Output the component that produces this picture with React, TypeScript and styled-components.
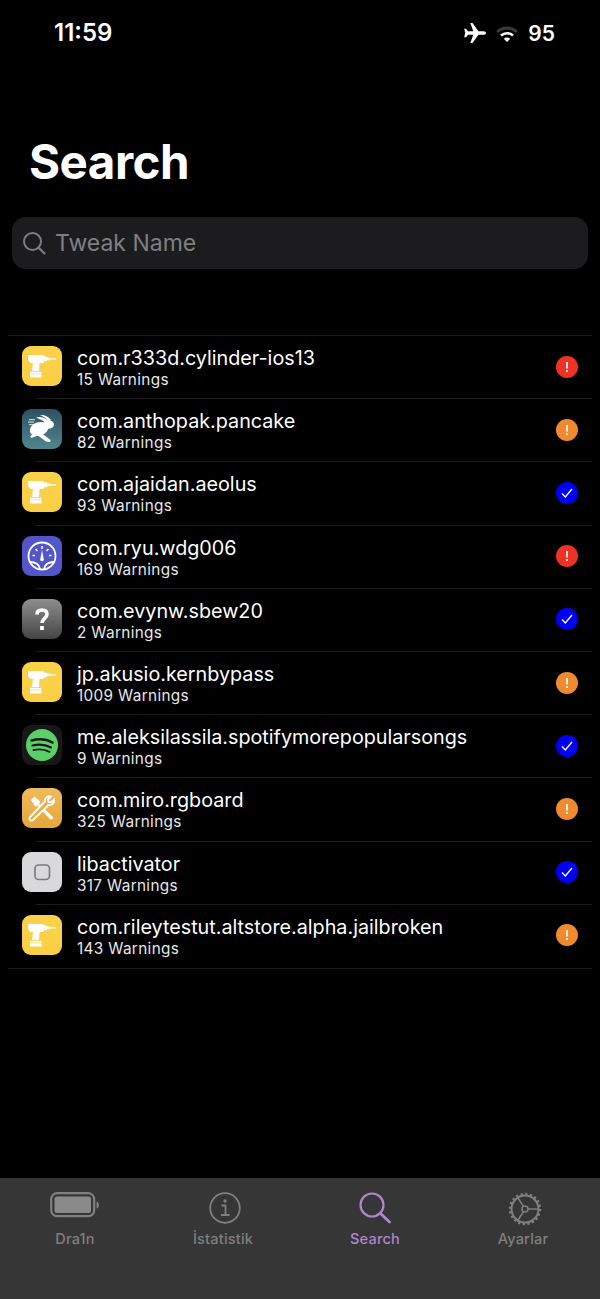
import React from 'react'
import styled, {createGlobalStyle} from 'styled-components'

const GlobalStyle = createGlobalStyle`
  html, body {
    margin: 0;
    padding: 0;
    background: #000;
  }
  body {
    font-family: Inter, "Liberation Sans", sans-serif;
    color: #fff;
  }
`

const Screen = styled.div`
  width: 600px;
  height: 1299px;
  display: flex;
  flex-direction: column;
  background: #000;
  overflow: hidden;
`

const StatusBar = styled.div`
  height: 66px;
  box-sizing: border-box;
  padding: 19px 45px 0 54px;
  display: flex;
  justify-content: space-between;
  align-items: flex-start;
`

const Time = styled.div`
  font-size: 24px;
  line-height: 28px;
  font-weight: 600;
`

const StatusIcons = styled.div`
  display: flex;
  align-items: center;
  height: 28px;
  gap: 9px;
`

const Battery = styled.div`
  font-size: 21px;
  font-weight: 600;
  margin-left: 1px;
`

const Title = styled.h1`
  margin: 0;
  padding: 65px 0 0 29px;
  font-size: 47.500px;
  line-height: 62px;
  font-weight: 700;
  letter-spacing: -0.5px;
`

const SearchBox = styled.div`
  margin: 24px 12px 0;
  height: 52px;
  background: #1c1c1e;
  border-radius: 14px;
  display: flex;
  align-items: center;
  padding-left: 9px;
  gap: 8px;
  color: #7c7c80;
`

const Placeholder = styled.span`
  font-size: 23px;
  color: #7f7f83;
`

const List = styled.div`
  margin: 66px 8px 0;
  border-top: 1px solid #1c1c1e;
  border-bottom: 1px solid #1c1c1e;
`

const Row = styled.div<{ $last?: boolean }>`
  height: 63.2px;
  box-sizing: border-box;
  position: relative;
  display: flex;
  align-items: center;
  padding: 0 14px;
  ${p => !p.$last && `
    &::after {
      content: '';
      position: absolute;
      left: 28px;
      right: 0;
      bottom: 0;
      height: 1px;
      background: #1c1c1e;
    }
  `}
`

const IconBox = styled.div<{ $bg: string }>`
  width: 40px;
  height: 40px;
  flex: none;
  margin-bottom: 3px;
  border-radius: 9px;
  background: ${p => p.$bg};
  display: flex;
  align-items: center;
  justify-content: center;
  overflow: hidden;
`

const Texts = styled.div`
  flex: 1;
  margin-left: 15px;
  min-width: 0;
`

const Name = styled.div`
  font-size: 19.75px;
  line-height: 24px;
  font-weight: 400;
  color: #fff;
`

const Sub = styled.div`
  font-size: 15.3px;
  line-height: 19px;
  color: #e8e8e8;
  letter-spacing: 0.35px;
`

const Badge = styled.div<{ $color: string }>`
  width: 22px;
  height: 22px;
  flex: none;
  margin-bottom: 2px;
  border-radius: 50%;
  background: ${p => p.$color};
  display: flex;
  align-items: center;
  justify-content: center;
`

const TabBar = styled.div`
  margin-top: auto;
  height: 121px;
  background: #363636;
  display: grid;
  grid-template-columns: repeat(4, 150px);
`

const Tab = styled.div<{ $active?: boolean }>`
  display: flex;
  flex-direction: column;
  align-items: center;
  color: ${p => p.$active ? '#b184cf' : '#7f7f7f'};
`

const TabIcon = styled.div`
  height: 50px;
  padding-top: 14px;
  box-sizing: border-box;
  display: flex;
  align-items: flex-start;
  justify-content: center;
`

const TabLabel = styled.span<{ $nudge?: boolean }>`
  margin-top: 2px;
  margin-right: ${p => p.$nudge ? '4px' : '0'};
  font-size: 14.5px;
  line-height: 18px;
  font-weight: 500;
  letter-spacing: 0.2px;
`

const Drill = () => (
  <svg width="40" height="40" viewBox="0 0 40 40" fill="#fff">
    <path d="M6 9h15l1.500 1.500H25v1h3v.8h6v1.200h-6v.8h-3v1h-2.500L21 17h-3.500l-.5 8h-7l1-8H8.500L6 14z"/>
    <rect x="8" y="25.800" width="11.500" height="1.800"/>
    <rect x="8" y="28.200" width="11.500" height="3.300"/>
  </svg>
)

const Rabbit = () => (
  <svg width="40" height="40" viewBox="0 0 40 40" fill="#fff">
    <ellipse cx="17" cy="20" rx="9.500" ry="6.800" transform="rotate(-18 17 20)"/>
    <ellipse cx="26.500" cy="15.500" rx="5.500" ry="4.300"/>
    <path d="M14 8.500c4-1.500 9 0 12.500 3.500l-2 2c-3.500-2.500-7-4-10.500-5.500z"/>
    <path d="M18 6c4-.5 8 1 11 5l-2 1.500C24.500 9.500 21.500 7.500 18 6z"/>
    <path d="M18 23l10 7.500c1.200 1 .5 2.800-1 2.500l-3-.5-9.500-7z"/>
    <path d="M15 24l-6 2.500c-1.200 1-.5 2.500 1 2.200l7-2.700z"/>
    <rect x="7" y="10" width="6" height="1.200" opacity=".7"/>
    <rect x="6" y="12.500" width="6" height="1.200" opacity=".7"/>
    <rect x="7" y="15" width="5" height="1.200" opacity=".7"/>
  </svg>
)

const Gauge = () => (
  <svg width="40" height="40" viewBox="0 0 40 40" fill="none" stroke="#fff" strokeWidth="1.800">
    <circle cx="20" cy="20" r="13.500"/>
    <path d="M8 26c5 0 9 1.500 10 7M32 26c-5 0-9 1.500-10 7"/>
    <path d="M20 10v3M13.500 13l2 2M26.500 13l-2 2M10.500 19.500h2.500M29.500 19.500h-2.500" strokeWidth="1.500"/>
    <path d="M20 14l1.800 9.500a1.800 1.800 0 1 1-3.600 0z" fill="#fff" stroke="none"/>
  </svg>
)

const Question = () => (
  <svg width="40" height="40" viewBox="0 0 40 40" fill="none" stroke="#fff" strokeWidth="3.600">
    <path d="M15 15.500c0-3 2-4.500 5-4.500s5 1.600 5 4.300c0 4.200-5 3.900-5 8.700"/>
    <rect x="18.100" y="27" width="3.800" height="4" fill="#fff" stroke="none"/>
  </svg>
)

const Spotify = () => (
  <svg width="40" height="40" viewBox="0 0 40 40" fill="none">
    <circle cx="20" cy="20" r="16" fill="#5bd068"/>
    <path d="M9.500 15.500c7-2 15-1.500 21 2" stroke="#1a1a1a" strokeWidth="2.600" strokeLinecap="round"/>
    <path d="M10.500 20.500c6-1.500 13-1 18.500 2" stroke="#1a1a1a" strokeWidth="2.200" strokeLinecap="round"/>
    <path d="M11.500 25c5-1 11-.8 16 1.800" stroke="#1a1a1a" strokeWidth="1.900" strokeLinecap="round"/>
  </svg>
)

const Tools = () => (
  <svg width="40" height="40" viewBox="0 0 40 40" fill="none" stroke="#fff" strokeWidth="1.800">
    <path d="M9 12l3.500-3.500 6 5.500-1.500 1.500 13.500 13c1.500 2-.5 4-2.500 2.500l-13-13.500-1.500 1.500z" fill="#fff" stroke="none"/>
    <path d="M29 8.500l-3 3 .5 2.500 2.500.5 3-3c.8 3-1.800 6.500-5.500 5.500L11 32c-2 1.800-5-1-3-3l15-15.500C22.500 10 26 7.500 29 8.500z" fill="#e9ad49"/>
  </svg>
)

const HomeButton = () => (
  <svg width="40" height="40" viewBox="0 0 40 40" fill="none">
    <rect x="13" y="13" width="14.500" height="14.500" rx="3.500" stroke="#7d7d7d" strokeWidth="1.700"/>
  </svg>
)

type Status = 'red' | 'orange' | 'blue'

const statusColors: Record<Status, string> = {
  red: '#ee3325',
  orange: '#f08a2e',
  blue: '#0000f5',
}

const StatusBadge = ({status}: { status: Status }) => (
  <Badge $color={statusColors[status]}>
    {status === 'blue' ? (
      <svg width="14" height="14" viewBox="0 0 14 14" fill="none" stroke="#fff" strokeWidth="1.300">
        <path d="M2 7.500l3.300 3.500L12 3"/>
      </svg>
    ) : (
      <svg width="4" height="10" viewBox="0 0 4 10" fill="#fff" opacity=".85">
        <rect x="1" y="0" width="2" height="6.500"/>
        <rect x="1" y="8" width="2" height="2"/>
      </svg>
    )}
  </Badge>
)

const yellow = 'linear-gradient(#fad24a, #f9cf45)'

const tweaks: { name: string; warnings: number; status: Status; bg: string; icon: React.ReactNode }[] = [
  {name: 'com.r333d.cylinder-ios13', warnings: 15, status: 'red', bg: yellow, icon: <Drill/>},
  {name: 'com.anthopak.pancake', warnings: 82, status: 'orange', bg: 'linear-gradient(#2f5062, #4f8690)', icon: <Rabbit/>},
  {name: 'com.ajaidan.aeolus', warnings: 93, status: 'blue', bg: yellow, icon: <Drill/>},
  {name: 'com.ryu.wdg006', warnings: 169, status: 'red', bg: '#5256c8', icon: <Gauge/>},
  {name: 'com.evynw.sbew20', warnings: 2, status: 'blue', bg: 'linear-gradient(#8e8e8e, #444)', icon: <Question/>},
  {name: 'jp.akusio.kernbypass', warnings: 1009, status: 'orange', bg: yellow, icon: <Drill/>},
  {name: 'me.aleksilassila.spotifymorepopularsongs', warnings: 9, status: 'blue', bg: '#181818', icon: <Spotify/>},
  {name: 'com.miro.rgboard', warnings: 325, status: 'orange', bg: 'linear-gradient(#f0bb5a, #e6a63c)', icon: <Tools/>},
  {name: 'libactivator', warnings: 317, status: 'blue', bg: '#d9d9db', icon: <HomeButton/>},
  {name: 'com.rileytestut.altstore.alpha.jailbroken', warnings: 143, status: 'orange', bg: yellow, icon: <Drill/>},
]

export default function App() {
  return (
    <Screen>
      <GlobalStyle/>
      <StatusBar>
        <Time>11:59</Time>
        <StatusIcons>
          <svg width="24" height="22" viewBox="0 0 24 22" fill="#fff">
            <path d="M23 11c0-1-1-1.800-2.500-1.800h-5L9.500 1H7.300l3 8.200H5L3 6.700H1.200l1 4.300-1 4.300H3l2-2.500h5.300l-3 8.200h2.200l6-8.200h5c1.500 0 2.500-.8 2.500-1.800z"/>
          </svg>
          <svg width="22" height="17" viewBox="0 0 22 17" fill="none">
            <path d="M1.200 7a14 14 0 0 1 19.600 0" stroke="#3a3a3a" strokeWidth="3"/>
            <path d="M5 10.500a9 9 0 0 1 12 0" stroke="#fff" strokeWidth="2.600"/>
            <path d="M11 17l-3.200-3.200a4.500 4.500 0 0 1 6.400 0z" fill="#fff"/>
          </svg>
          <Battery>95</Battery>
        </StatusIcons>
      </StatusBar>
      <Title>Search</Title>
      <SearchBox>
        <svg width="26" height="26" viewBox="0 0 26 26" fill="none" stroke="currentColor" strokeWidth="2">
          <circle cx="11.500" cy="11.500" r="8.500"/>
          <path d="M17.500 17.500l6 6" strokeLinecap="round" strokeWidth="2.400"/>
        </svg>
        <Placeholder>Tweak Name</Placeholder>
      </SearchBox>
      <List>
        {tweaks.map((t, i) => (
          <Row key={t.name} $last={i === tweaks.length - 1}>
            <IconBox $bg={t.bg}>{t.icon}</IconBox>
            <Texts>
              <Name>{t.name}</Name>
              <Sub>{t.warnings} Warnings</Sub>
            </Texts>
            <StatusBadge status={t.status}/>
          </Row>
        ))}
      </List>
      <TabBar>
        <Tab>
          <TabIcon>
            <svg width="50" height="26" viewBox="0 0 50 26" fill="none">
              <rect x="1.200" y="1.200" width="43" height="23" rx="6" stroke="currentColor" strokeWidth="2.200"/>
              <rect x="4.500" y="4.500" width="36.500" height="16.500" rx="2.500" fill="#8a8a8a"/>
              <path d="M46.500 9.500c2 .5 2.500 2 2.500 3.500s-.5 3-2.500 3.500z" fill="currentColor"/>
            </svg>
          </TabIcon>
          <TabLabel>Dra1n</TabLabel>
        </Tab>
        <Tab>
          <TabIcon>
            <svg width="32" height="32" viewBox="0 0 32 32" fill="none" stroke="currentColor">
              <circle cx="16" cy="16" r="14.800" strokeWidth="1.800"/>
              <circle cx="16" cy="9" r="1.700" fill="currentColor" stroke="none"/>
              <path d="M12.500 13.500h4v9M12 23h8.500" strokeWidth="1.800"/>
            </svg>
          </TabIcon>
          <TabLabel $nudge>İstatistik</TabLabel>
        </Tab>
        <Tab $active>
          <TabIcon>
            <svg width="32" height="32" viewBox="0 0 32 32" fill="none" stroke="currentColor" strokeWidth="2.200">
              <circle cx="13" cy="13" r="11.500"/>
              <path d="M21.500 21.500l9 8.500" strokeLinecap="round" strokeWidth="2.800"/>
            </svg>
          </TabIcon>
          <TabLabel>Search</TabLabel>
        </Tab>
        <Tab>
          <TabIcon>
            <svg width="34" height="34" viewBox="0 0 34 34" fill="none" stroke="currentColor">
              <circle cx="17" cy="17" r="13.500" strokeWidth="2"/>
              <circle cx="17" cy="17" r="15" strokeWidth="2.500" strokeDasharray="2.200 2.500"/>
              <circle cx="17" cy="17" r="3" strokeWidth="1.600"/>
              <path d="M20 17h10.500M15.500 14.400L9 4.500M15.500 19.600L9 29.500" strokeWidth="1.600"/>
            </svg>
          </TabIcon>
          <TabLabel $nudge>Ayarlar</TabLabel>
        </Tab>
      </TabBar>
    </Screen>
  )
}
